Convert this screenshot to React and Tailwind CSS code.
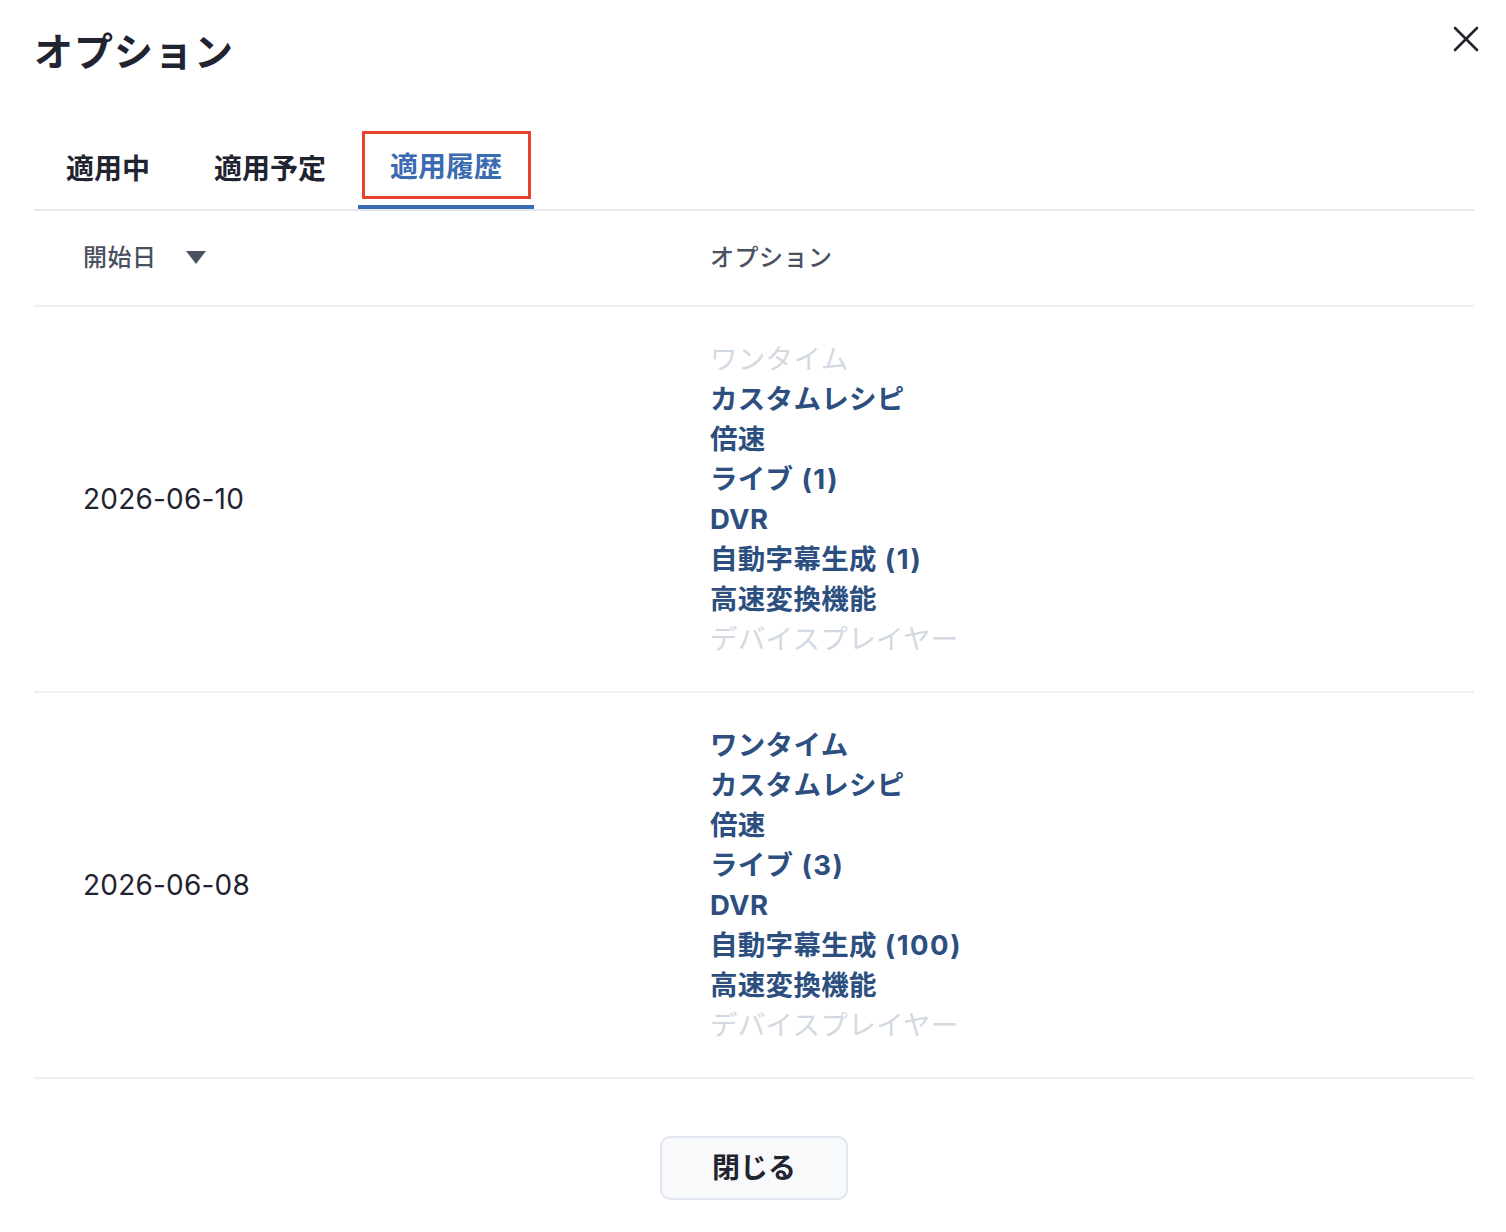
import React from "react";

const FONT = { fontFamily: 'Inter, "Noto Sans CJK JP", sans-serif' };

const rows = [
  {
    date: "2026-06-10",
    items: [
      ["ワンタイム", false],
      ["カスタムレシピ", true],
      ["倍速", true],
      ["ライブ (1)", true],
      ["DVR", true],
      ["自動字幕生成 (1)", true],
      ["高速変換機能", true],
      ["デバイスプレイヤー", false],
    ],
  },
  {
    date: "2026-06-08",
    items: [
      ["ワンタイム", true],
      ["カスタムレシピ", true],
      ["倍速", true],
      ["ライブ (3)", true],
      ["DVR", true],
      ["自動字幕生成 (100)", true],
      ["高速変換機能", true],
      ["デバイスプレイヤー", false],
    ],
  },
];

function Label({ t }) {
  const m = t.match(/^(.*?)( \(\d+\))$/);
  if (!m) return t;
  return (
    <>
      {m[1]}
      <span className="tracking-[1.5px]">{m[2]}</span>
    </>
  );
}

export default function App() {
  return (
    <div className="w-[1506px] h-[1232px] bg-white relative overflow-hidden" style={FONT}>
      <button className="absolute right-[27px] top-[26px] w-[26px] h-[26px] flex items-center justify-center text-[#1f2430]">
        <svg width="26" height="26" viewBox="0 0 26 26" fill="none" stroke="currentColor" strokeWidth="2.6" strokeLinecap="round">
          <path d="M2 2L24 24M24 2L2 24" />
        </svg>
      </button>
      <div className="pl-[34px] pr-[32px] pt-[26px]">
        <h1 className="text-[39px] leading-[52px] font-bold text-[#1f2430] tracking-[1px]">オプション</h1>
        <div className="mt-[51px] flex border-b-2 border-[#e5e8ee]">
          <div className="px-8 h-[80px] flex items-center text-[28px] font-bold text-[#1f2430]">適用中</div>
          <div className="px-8 h-[80px] flex items-center text-[28px] font-bold text-[#1f2430]">適用予定</div>
          <div className="relative px-8 h-[80px] flex items-center text-[28px] font-bold text-[#3b6bb0] border-b-4 border-[#3b6bb0] -mb-[2px]">
            適用履歴
            <div className="absolute left-[4px] right-[3px] top-[2px] bottom-[6px] border-[3px] border-[#e8412c]"></div>
          </div>
        </div>
        <div className="grid grid-cols-[676px_1fr] h-[96px] items-center border-b-2 border-[#eef0f4]">
          <div className="pl-[49px] flex items-center text-[24px] font-medium text-[#4a5160]">
            <span className="tracking-[0.5px]">開始日</span>
            <svg className="ml-[29px]" width="20" height="14" viewBox="0 0 20 14">
              <path d="M0 0H20L10 13Z" fill="#4a5160" />
            </svg>
          </div>
          <div className="text-[24px] font-medium text-[#4a5160] tracking-[0.5px]">オプション</div>
        </div>
        {rows.map((r) => (
          <div key={r.date} className="grid grid-cols-[676px_1fr] items-center border-b-2 border-[#eef0f4] py-8">
            <div className="pl-[49px] text-[28px] text-[#1f2430] tracking-[0.2px]">{r.date}</div>
            <div className="flex flex-col">
              {r.items.map(([t, on], i) => (
                <div
                  key={i}
                  className={
                    "h-[40px] leading-[40px] text-[27.5px] tracking-[0.3px] " +
                    (on ? "font-bold text-[#2c4f80]" : "font-normal text-[#d3d9e2]")
                  }
                >
                  <Label t={t} />
                </div>
              ))}
            </div>
          </div>
        ))}
        <div className="flex justify-center mt-[57px]">
          <button className="w-[188px] h-[64px] rounded-[10px] border-2 border-[#e2e6ee] bg-[#f8f9fb] text-[28px] font-bold text-[#1f2430]">
            閉じる
          </button>
        </div>
      </div>
    </div>
  );
}
